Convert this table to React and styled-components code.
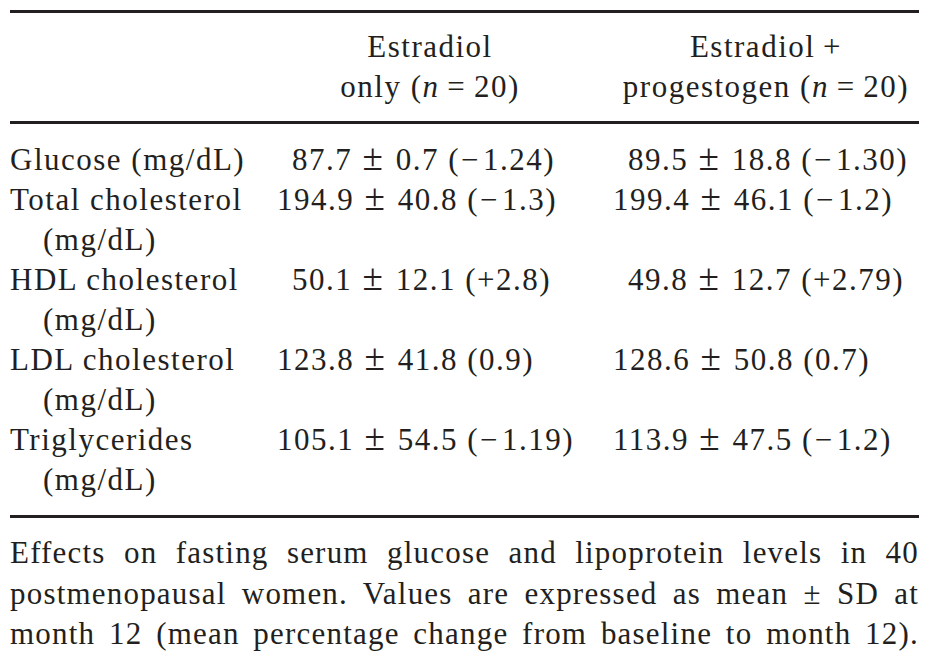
import React from "react";
import styled, { createGlobalStyle } from "styled-components";

const Global = createGlobalStyle`
  html, body { margin: 0; padding: 0; background: #fff; }
  body {
    font-family: "Liberation Serif", "DejaVu Serif", serif;
    color: #231f20;
  }
`;

const Page = styled.div`
  width: 909px;
  padding: 10px 11px 0 10px;
  font-size: 31px;
  line-height: 40px;
  letter-spacing: 1.5px;
`;

const Rule = styled.div`
  height: 3px;
  background: #231f20;
`;

const Grid = styled.div`
  display: grid;
  grid-template-columns: 267px 336px 1fr;
  padding: ${(p) => p.$pad};
`;

const HeadCell = styled.div`
  text-align: center;
  grid-column: ${(p) => p.$col};
  padding-right: ${(p) => p.$pr || 0}px;
`;

const Label = styled.div`
  grid-column: 1;
  white-space: nowrap;
`;

const Unit = styled.div`
  padding-left: 33px;
`;

const Value = styled.div`
  white-space: nowrap;
  padding-left: ${(p) => (p.$short ? 15 : 0)}px;
`;

const Pm = styled.span`
  font-size: 1.2em;
  line-height: 0;
  margin: 0 2px 0 1px;
`;

const Minus = styled.span`
  margin: 0 3px 0 1px;
`;

const Caption = styled.div`
  padding-top: 15px;
  font-size: 31px;
  line-height: 40.5px;
  letter-spacing: 1.2px;
`;

const CaptionLine = styled.span`
  display: block;
  text-align: justify;
  text-align-last: justify;
`;

const N = () => (
  <>
    (<i>n</i>{"\u2009"}={"\u2009"}20)
  </>
);

const Change = ({ v }) =>
  v.startsWith("-") ? (
    <>
      (<Minus>{"\u2212"}</Minus>
      {v.slice(1)})
    </>
  ) : (
    <>({v})</>
  );

const Val = ({ mean, sd, ch, short }) => (
  <Value $short={short}>
    {mean} <Pm>±</Pm> {sd} <Change v={ch} />
  </Value>
);

const rows = [
  { label: "Glucose (mg/dL)", a: ["87.7", "0.7", "-1.24", true], b: ["89.5", "18.8", "-1.30", true] },
  { label: "Total cholesterol", unit: true, a: ["194.9", "40.8", "-1.3"], b: ["199.4", "46.1", "-1.2"] },
  { label: "HDL cholesterol", unit: true, a: ["50.1", "12.1", "+2.8", true], b: ["49.8", "12.7", "+2.79", true] },
  { label: "LDL cholesterol", unit: true, a: ["123.8", "41.8", "0.9"], b: ["128.6", "50.8", "0.7"] },
  { label: "Triglycerides", unit: true, a: ["105.1", "54.5", "-1.19"], b: ["113.9", "47.5", "-1.2"] },
];

export default function App() {
  return (
    <>
      <Global />
      <Page>
        <Rule />
        <Grid $pad="14px 0 14px 0">
          <HeadCell $col="2" $pr="30">
            Estradiol
            <br />
            only <N />
          </HeadCell>
          <HeadCell $col="3">
            Estradiol{"\u2009"}+
            <br />
            progestogen <N />
          </HeadCell>
        </Grid>
        <Rule />
        <Grid $pad="16px 0 15px 0">
          {rows.map((r) => (
            <React.Fragment key={r.label}>
              <Label>
                {r.label}
                {r.unit && <Unit>(mg/dL)</Unit>}
              </Label>
              <Val mean={r.a[0]} sd={r.a[1]} ch={r.a[2]} short={r.a[3]} />
              <Val mean={r.b[0]} sd={r.b[1]} ch={r.b[2]} short={r.b[3]} />
            </React.Fragment>
          ))}
        </Grid>
        <Rule />
        <Caption>
          <CaptionLine>
            Effects on fasting serum glucose and lipoprotein levels in 40
          </CaptionLine>
          <CaptionLine>
            postmenopausal women. Values are expressed as mean ± SD at
          </CaptionLine>
          <CaptionLine>
            month 12 (mean percentage change from baseline to month 12).
          </CaptionLine>
        </Caption>
      </Page>
    </>
  );
}
